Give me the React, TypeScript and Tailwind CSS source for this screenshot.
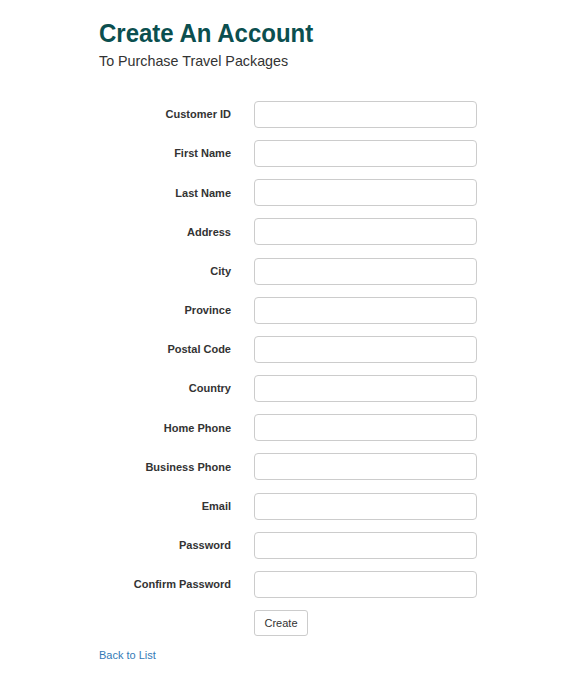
import React from 'react';

const fields = [
  'Customer ID',
  'First Name',
  'Last Name',
  'Address',
  'City',
  'Province',
  'Postal Code',
  'Country',
  'Home Phone',
  'Business Phone',
  'Email',
  'Password',
  'Confirm Password',
];

const App: React.FC = () => {
  return (
    <div className="min-h-[674px] bg-white font-['Liberation_Sans',Arial,sans-serif] text-[#333]">
      <div className="pl-[99px] pt-[17px]">
        <h1 className="text-[24px] leading-[30px] font-bold text-[#0b4f4f] scale-y-[1.08] origin-top-left">Create An Account</h1>
        <p className="mt-[4px] text-[14.3px] leading-[20px]">To Purchase Travel Packages</p>

        <form className="mt-[30px] flex flex-col gap-y-[12.17px]" onSubmit={e => e.preventDefault()}>
          {fields.map(f => (
            <div key={f} className="flex items-center">
              <label className="w-[132px] text-right text-[11px] font-bold">{f}</label>
              <input
                type={f.includes('Password') ? 'password' : 'text'}
                className="ml-[23px] w-[223px] h-[27px] rounded-[4px] border border-[#ccc] px-2 text-[12px] outline-none"
              />
            </div>
          ))}
          <div className="pl-[155px]">
            <button
              type="submit"
              className="w-[54px] h-[26px] rounded-[3px] border border-[#ccc] bg-white text-[11px] text-[#333]"
            >
              Create
            </button>
          </div>
        </form>

        <a href="#" className="mt-[11px] block w-fit text-[11px] leading-[17px] text-[#337ab7]">
          Back to List
        </a>
      </div>
    </div>
  );
};

export default App;
